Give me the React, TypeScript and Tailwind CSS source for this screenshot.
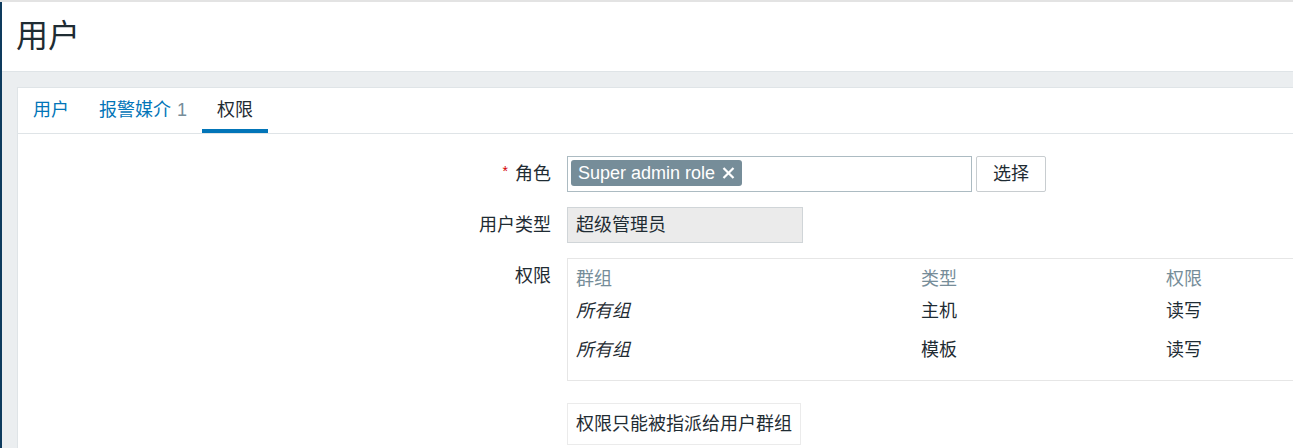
const font = {
  fontFamily: '"Liberation Sans", "Noto Sans CJK SC", sans-serif',
};

type PermRow = { group: string; type: string; access: string };

const rows: PermRow[] = [
  { group: "所有组", type: "主机", access: "读写" },
  { group: "所有组", type: "模板", access: "读写" },
];

function Tabs() {
  return (
    <div className="flex h-[46px] border-b border-[#dfe4e7] text-[18px]">
      <div className="flex items-center px-[15px] pt-[3px] border-b-4 border-transparent text-[#0275b8]">
        用户
      </div>
      <div className="flex items-center px-[15px] pt-[3px] border-b-4 border-transparent text-[#0275b8]">
        报警媒介<span className="ml-[6px] text-[#768d99]">1</span>
      </div>
      <div className="flex items-center px-[15px] pt-[3px] border-b-4 border-[#0275b8] text-[#1f2c33]">
        权限
      </div>
    </div>
  );
}

function Label({ children }: { children: React.ReactNode }) {
  return (
    <div className="flex h-[36px] items-center justify-end self-start">
      {children}
    </div>
  );
}

function RoleTag() {
  return (
    <div className="flex h-[26px] items-center gap-[7px] rounded-[3px] bg-[#768d99] pl-[7px] pr-[7px] text-[18px] text-white">
      Super admin role
      <svg width="13" height="12" viewBox="0 0 13 12" fill="none">
        <path d="M1.5 1 L11.5 11 M11.5 1 L1.5 11" stroke="white" strokeWidth="2.2" />
      </svg>
    </div>
  );
}

function PermTable() {
  return (
    <div className="w-[780px] h-[123px] border border-[#e6e6e6] pt-[4px] text-[18px]">
      <div className="grid h-[32px] grid-cols-[345px_245px_1fr] items-center pl-[8px] text-[#768d99]">
        <div>群组</div>
        <div>类型</div>
        <div>权限</div>
      </div>
      {rows.map((r, i) => (
        <div
          key={i}
          className={
            "grid grid-cols-[345px_245px_1fr] items-center pl-[8px] " +
            (i === 0 ? "h-[32px]" : "h-[39px] pt-[8px]")
          }
        >
          <div className="italic">{r.group}</div>
          <div>{r.type}</div>
          <div>{r.access}</div>
        </div>
      ))}
    </div>
  );
}

export default function App() {
  return (
    <div className="h-screen overflow-hidden bg-white text-[#1f2c33]" style={font}>
      <div className="h-[2px] bg-[#e3e3e3]" />
      <div className="flex h-full">
        <div className="w-[2px] shrink-0 bg-[#0e3b5e]" />
        <div className="min-w-0 flex-1">
          {/* header */}
          <div className="flex h-[70px] items-center border-b border-[#dfe4e7] pb-[2px] pl-[14px] text-[32px]">
            用户
          </div>

          {/* body */}
          <div className="h-full bg-[#ebeef0] pl-[15px] pt-[15px]">
            <div className="h-full border-l border-t border-[#dfe4e7] bg-white">
              <Tabs />

              <div className="grid grid-cols-[533px_1fr] gap-x-4 gap-y-[15px] pt-[22px] text-[18px]">
                <Label>
                  <span className="relative -top-[3px] mr-[7px] text-[14px] text-[#d40000]">*</span>
                  角色
                </Label>
                <div className="flex gap-[4px]">
                  <div className="flex h-[36px] w-[405px] border border-[#acbbc2] p-[3px]">
                    <RoleTag />
                  </div>
                  <button className="h-[36px] w-[70px] rounded-[2px] border border-[#c8cdd0] bg-white text-[18px] text-[#1f2c33]">
                    选择
                  </button>
                </div>

                <Label>用户类型</Label>
                <div className="flex h-[36px] w-[236px] items-center border border-[#d0d5d8] bg-[#ebebeb] px-[8px]">
                  超级管理员
                </div>

                <Label>权限</Label>
                <PermTable />

                <div />
                <div className="mt-[7px] flex h-[42px] w-[234px] items-center border border-[#ebebeb] px-[8px]">
                  权限只能被指派给用户群组
                </div>
              </div>
            </div>
          </div>
        </div>
      </div>
    </div>
  );
}
